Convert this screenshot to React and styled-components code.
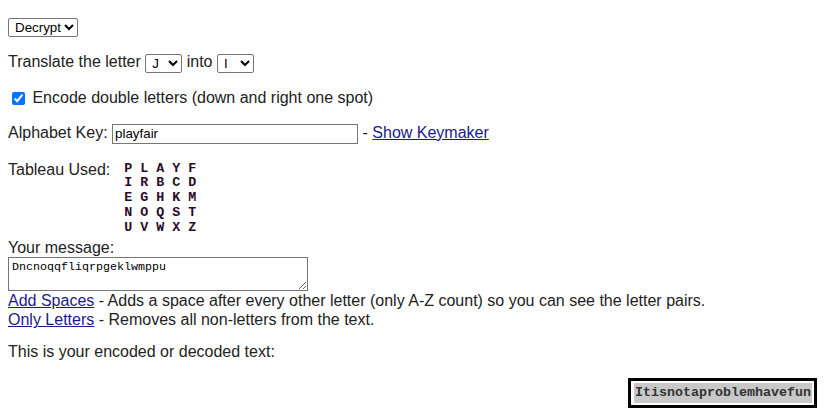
import React, { useState } from "react";
import styled, { createGlobalStyle } from "styled-components";

const GlobalStyle = createGlobalStyle`
  body {
    margin: 8px;
    font-family: "Liberation Sans", Arial, sans-serif;
    font-size: 16px;
    color: #222;
    background: #fff;
  }
`;

const Para = styled.p`
  margin: ${(p) => p.$margin || "16px 0"};
  line-height: 18px;
`;

const Select = styled.select`
  font-family: "Liberation Sans", Arial, sans-serif;
  font-size: 13.33px;
  height: 19px;
  padding: 0 0 0 2px;
  border: 1px solid #767676;
  border-radius: 2px;
  background: #fff;
  color: #000;
  width: ${(p) => p.$width || "auto"};
  vertical-align: middle;
`;

const Check = styled.input`
  margin: 3px 3px 3px 4px;
  width: 13px;
  height: 13px;
  vertical-align: -2px;
  accent-color: #0075ff;
`;

const TextInput = styled.input`
  font-family: "Liberation Sans", Arial, sans-serif;
  font-size: 13.33px;
  width: 246px;
  height: 20px;
  padding: 1px 2px;
  border: 1px solid #767676;
  box-sizing: border-box;
  vertical-align: middle;
`;

const Link = styled.a`
  color: #1a1a8c;
  text-decoration: underline;
  cursor: pointer;
`;

const TableauRow = styled.div`
  display: flex;
  align-items: flex-start;
  gap: 14px;
  margin-top: 16px;
`;

const Tableau = styled.pre`
  margin: 2px 0 3px;
  font-family: "Liberation Mono", "Courier New", monospace;
  font-weight: bold;
  font-size: 13.33px;
  line-height: 14.75px;
  color: #2a0a2a;
`;

const Label = styled.div`
  line-height: 19px;
`;

const MessageBox = styled.textarea`
  display: block;
  width: 300px;
  height: 34px;
  box-sizing: border-box;
  margin: 0;
  padding: 2px 3px;
  font-family: "Liberation Mono", "Courier New", monospace;
  font-size: 11.67px;
  color: #000;
  border: 1px solid #767676;
  resize: both;
`;

const OutputRow = styled.div`
  display: flex;
  justify-content: flex-end;
  margin: 17px 5px 0 0;
`;

const OutputBox = styled.div`
  display: flex;
  border: 3px solid #000;
  padding: 2px 2px 2px 3px;
`;

const Highlight = styled.span`
  display: block;
  background: #c8c8c8;
  color: #333;
  font-family: "Liberation Mono", "Courier New", monospace;
  font-weight: bold;
  font-size: 13.33px;
  line-height: 20px;
  padding: 0 1px;
`;

const TABLEAU = ["PLAYF", "IRBCD", "EGHKM", "NOQST", "UVWXZ"];

const App = () => {
  const [mode, setMode] = useState("Decrypt");
  const [message, setMessage] = useState("Dncnoqqfliqrpgeklwmppu");
  const [key, setKey] = useState("playfair");

  return (
    <>
      <GlobalStyle />
      <Para $margin="10px 0 16px">
        <Select value={mode} onChange={(e) => setMode(e.target.value)}>
          <option>Encrypt</option>
          <option>Decrypt</option>
        </Select>
      </Para>
      <Para>
        Translate the letter{" "}
        <Select $width="37px" defaultValue="J">
          <option>J</option>
        </Select>{" "}
        into{" "}
        <Select $width="37px" defaultValue="I">
          <option>I</option>
        </Select>
      </Para>
      <Para>
        <Check type="checkbox" defaultChecked /> Encode double letters (down and
        right one spot)
      </Para>
      <Para>
        Alphabet Key:{" "}
        <TextInput value={key} onChange={(e) => setKey(e.target.value)} /> -{" "}
        <Link>Show Keymaker</Link>
      </Para>
      <TableauRow>
        <Label>Tableau Used:</Label>
        <Tableau>{TABLEAU.map((r) => r.split("").join(" ")).join("\n")}</Tableau>
      </TableauRow>
      <Label>Your message:</Label>
      <MessageBox value={message} onChange={(e) => setMessage(e.target.value)} />
      <Label>
        <Link>Add Spaces</Link> - Adds a space after every other letter (only
        A-Z count) so you can see the letter pairs.
      </Label>
      <Label>
        <Link>Only Letters</Link> - Removes all non-letters from the text.
      </Label>
      <Para $margin="14px 0 16px">This is your encoded or decoded text:</Para>
      <OutputRow>
        <OutputBox>
          <Highlight>Itisnotaproblemhavefun</Highlight>
        </OutputBox>
      </OutputRow>
    </>
  );
};

export default App;
